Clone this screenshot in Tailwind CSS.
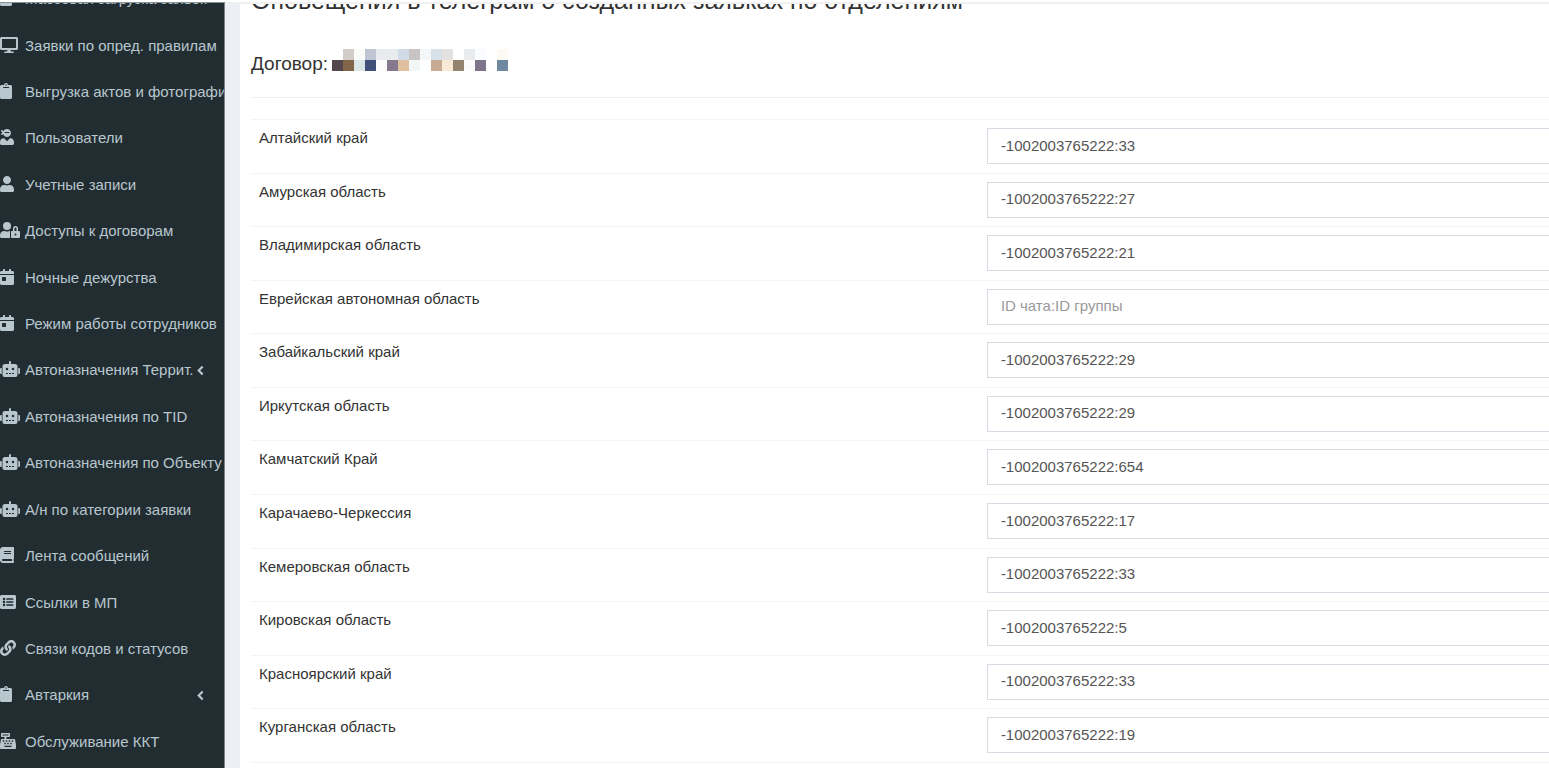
<!DOCTYPE html>
<html lang="ru">
<head>
  <meta charset="UTF-8" />
  <title>Оповещения в телеграм</title>
  <script src="https://cdn.jsdelivr.net/npm/@tailwindcss/browser@4"></script>
</head>
<body class="h-screen overflow-hidden bg-white pt-[2px] font-['Liberation_Sans',Arial,sans-serif] text-[15px] leading-5 text-[#333]">
  <!-- icons -->
  <svg class="hidden">
    <symbol id="i-desktop" viewBox="0 0 576 512"><path d="M528 0H48C21.500 0 0 21.500 0 48v320c0 26.500 21.500 48 48 48h192l-16 48h-72c-13.300 0-24 10.700-24 24s10.700 24 24 24h272c13.300 0 24-10.700 24-24s-10.700-24-24-24h-72l-16-48h192c26.500 0 48-21.500 48-48V48c0-26.500-21.500-48-48-48zm-16 352H64V64h448v288z"/></symbol>
    <symbol id="i-clipboard" viewBox="0 0 384 512"><path d="M384 112v352c0 26.510-21.490 48-48 48H48c-26.510 0-48-21.490-48-48V112c0-26.510 21.490-48 48-48h80c0-35.290 28.710-64 64-64s64 28.710 64 64h80c26.510 0 48 21.490 48 48zM192 40c-13.255 0-24 10.745-24 24s10.745 24 24 24 24-10.745 24-24-10.745-24-24-24m96 114v-20a6 6 0 0 0-6-6H102a6 6 0 0 0-6 6v20a6 6 0 0 0 6 6h180a6 6 0 0 0 6-6z"/></symbol>
    <symbol id="i-ninja" viewBox="0 0 448 512"><path d="M325.400 289.200L224 390.600 122.600 289.200C54 295.300 0 352.200 0 422.400V464c0 26.500 21.500 48 48 48h352c26.500 0 48-21.500 48-48v-41.600c0-70.200-54-127.100-122.600-133.200zM32 192c27.300 0 51.800-11.500 69.200-29.700 15.100 53.900 64 93.700 122.800 93.700 70.700 0 128-57.300 128-128S294.700 0 224 0c-50.400 0-93.600 29.400-114.500 71.800C92.100 47.800 64 32 32 32c0 33.400 17.100 62.800 43.100 80-26 17.200-43.100 46.600-43.100 80zm144-96h96c17.700 0 32 14.300 32 32H144c0-17.700 14.300-32 32-32z"/></symbol>
    <symbol id="i-user" viewBox="0 0 448 512"><path d="M224 256c70.700 0 128-57.300 128-128S294.700 0 224 0 96 57.300 96 128s57.300 128 128 128zm89.600 32h-16.700c-22.200 10.200-46.900 16-72.900 16s-50.600-5.800-72.900-16h-16.700C60.200 288 0 348.200 0 422.400V464c0 26.500 21.500 48 48 48h352c26.500 0 48-21.500 48-48v-41.600c0-74.200-60.200-134.400-134.400-134.400z"/></symbol>
    <symbol id="i-lock" viewBox="0 0 640 512"><path d="M224 256A128 128 0 1 0 96 128a128 128 0 0 0 128 128zm96 64a63.080 63.080 0 0 1 8.100-30.500c-4.800-.5-9.500-1.500-14.500-1.500h-16.700a174.080 174.080 0 0 1-145.800 0h-16.700A134.430 134.430 0 0 0 0 422.400V464a48 48 0 0 0 48 48h280.900a63.540 63.540 0 0 1-8.900-32zm288-32h-32v-80a80 80 0 0 0-160 0v80h-32a32 32 0 0 0-32 32v160a32 32 0 0 0 32 32h224a32 32 0 0 0 32-32V320a32 32 0 0 0-32-32zM496 432a32 32 0 1 1 32-32 32 32 0 0 1-32 32zm32-144h-64v-80a32 32 0 0 1 64 0z"/></symbol>
    <symbol id="i-calendar" viewBox="0 0 448 512"><path d="M0 464c0 26.500 21.500 48 48 48h352c26.500 0 48-21.500 48-48V192H0v272zm64-192c0-8.800 7.200-16 16-16h96c8.800 0 16 7.200 16 16v96c0 8.800-7.200 16-16 16H80c-8.800 0-16-7.200-16-16v-96zM400 64h-48V16c0-8.800-7.200-16-16-16h-32c-8.800 0-16 7.200-16 16v48H160V16c0-8.800-7.200-16-16-16h-32c-8.800 0-16 7.200-16 16v48H48C21.500 64 0 85.500 0 112v48h448v-48c0-26.500-21.500-48-48-48z"/></symbol>
    <symbol id="i-robot" viewBox="0 0 640 512"><path d="M0 256a32 32 0 0 1 32-32H56V416H32A32 32 0 0 1 0 384ZM560 176V448a64 64 0 0 1-64 64H144a64 64 0 0 1-64-64V176a80 80 0 0 1 80-80H288V32a32 32 0 0 1 64 0V96H480A80 80 0 0 1 560 176ZM264 256a40 40 0 1 0-40 40A40 40 0 0 0 264 256Zm-8 128H192v32h64Zm96 0H288v32h64ZM456 256a40 40 0 1 0-40 40A40 40 0 0 0 456 256Zm-8 128H384v32h64ZM640 256V384a32 32 0 0 1-32 32H584V224h24A32 32 0 0 1 640 256Z"/></symbol>
    <symbol id="i-book" viewBox="0 0 448 512"><path d="M448 360V24c0-13.300-10.700-24-24-24H96C43 0 0 43 0 96v320c0 53 43 96 96 96h328c13.300 0 24-10.700 24-24v-16c0-7.500-3.500-14.300-8.900-18.700-4.200-15.400-4.200-59.300 0-74.700 5.400-4.300 8.900-11.100 8.900-18.600zM128 134c0-3.300 2.700-6 6-6h212c3.300 0 6 2.700 6 6v20c0 3.300-2.700 6-6 6H134c-3.300 0-6-2.700-6-6v-20zm0 64c0-3.300 2.700-6 6-6h212c3.300 0 6 2.700 6 6v20c0 3.300-2.700 6-6 6H134c-3.300 0-6-2.700-6-6v-20zm253.400 250H96c-17.700 0-32-14.300-32-32 0-17.600 14.400-32 32-32h285.400c-1.900 17.100-1.900 46.900 0 64z"/></symbol>
    <symbol id="i-list" viewBox="0 0 512 512"><path fill-rule="evenodd" d="M464 480H48c-26.500 0-48-21.500-48-48V80c0-26.500 21.500-48 48-48h416c26.500 0 48 21.500 48 48v352c0 26.500-21.500 48-48 48zM88 160a40 40 0 1 0 80 0a40 40 0 1 0-80 0zM88 256a40 40 0 1 0 80 0a40 40 0 1 0-80 0zM88 352a40 40 0 1 0 80 0a40 40 0 1 0-80 0zM200 136h224v48H200zM200 232h224v48H200zM200 328h224v48H200z"/></symbol>
    <symbol id="i-link" viewBox="0 0 512 512"><path d="M326.612 185.391c59.747 59.809 58.927 155.698.36 214.590-.11.120-.24.250-.36.370l-67.200 67.200c-59.270 59.270-155.699 59.262-214.960 0-59.270-59.260-59.270-155.700 0-214.960l37.106-37.106c9.840-9.840 26.786-3.300 27.294 10.606.648 17.722 3.826 35.527 9.690 52.721 1.986 5.822.567 12.262-3.783 16.612l-13.087 13.087c-28.026 28.026-28.905 73.660-1.155 101.960 28.024 28.579 74.086 28.749 102.325.510l67.200-67.190c28.191-28.191 28.073-73.757 0-101.830-3.701-3.694-7.429-6.564-10.341-8.569a16.037 16.037 0 0 1-6.947-12.606c-.396-10.567 3.348-21.456 11.698-29.806l21.054-21.055c5.521-5.521 14.182-6.199 20.584-1.731a152.482 152.482 0 0 1 20.522 17.197zM467.547 44.449c-59.261-59.262-155.690-59.270-214.960 0l-67.200 67.200c-.12.120-.25.250-.36.370-58.566 58.892-59.387 154.781.360 214.590a152.454 152.454 0 0 0 20.521 17.196c6.402 4.468 15.064 3.789 20.584-1.731l21.054-21.055c8.350-8.350 12.094-19.239 11.698-29.806a16.037 16.037 0 0 0-6.947-12.606c-2.912-2.005-6.640-4.875-10.341-8.569-28.073-28.073-28.191-73.639 0-101.830l67.200-67.190c28.239-28.239 74.300-28.069 102.325.510 27.750 28.300 26.872 73.934-1.155 101.960l-13.087 13.087c-4.350 4.350-5.769 10.790-3.783 16.612 5.864 17.194 9.042 34.999 9.690 52.721.509 13.906 17.454 20.446 27.294 10.606l37.106-37.106c59.271-59.259 59.271-155.699.001-214.959z"/></symbol>
    <symbol id="i-register" viewBox="0 0 512 512"><path fill-rule="evenodd" d="M511 379l-27-160c-2-15-16-27-31-27H208v-64h96c9 0 16-7 16-16V16c0-9-7-16-16-16H48c-9 0-16 7-16 16v96c0 9 7 16 16 16h96v64H59c-15 0-29 12-31 27L1 379c-1 3-1 7-1 10v91c0 18 14 32 32 32h448c18 0 32-14 32-32v-91c0-3 0-7-1-10zM80 48h192v32H80zM88 232h48v48H88zM184 232h48v48h-48zM280 232h48v48h-48zM376 232h48v48h-48zM136 312h48v48h-48zM232 312h48v48h-48zM328 312h48v48h-48zM144 408h224v40H144z"/></symbol>
    <symbol id="i-angle" viewBox="0 0 8 12"><path d="M6.500 1.500L2 6l4.500 4.500" fill="none" stroke="currentColor" stroke-width="2.500"/></symbol>
  </svg>

  <div class="flex h-full">
    <aside class="w-[225px] shrink-0 overflow-hidden border-t border-r border-t-[#8a9194] border-r-[#7d8589] bg-[#222d32] text-[#b8c7ce]">
      <ul id="menu" class="-mt-[27px] grid h-[789px] auto-rows-fr"></ul>
    </aside>

    <main class="min-w-0 grow border-l-[15px] border-[#ecf0f5]">
      <div class="overflow-hidden border-t-2 border-[#f1f1f2] pl-[11px]">
        <h1 class="-mt-[18px] text-[25px] leading-7 whitespace-nowrap">Оповещения в телеграм о созданных заявках по отделениям</h1>
        <div class="mt-[38px] flex items-center">
          <h2 class="w-[81px] text-[19px] leading-6">Договор:</h2>
          <svg id="mosaic" class="-mt-2 h-[22px] w-[176px]" viewBox="0 0 16 2" shape-rendering="crispEdges"></svg>
        </div>
        <hr class="mt-[21px] mb-[21px] border-[#eee]" />
        <table class="h-[644px] w-full table-fixed border-collapse">
          <tbody id="regions"></tbody>
        </table>
      </div>
    </main>
  </div>

  <script>
    const menu = [
      ['clipboard', 'Массовая загрузка заявок'],
      ['desktop', 'Заявки по опред. правилам'],
      ['clipboard', 'Выгрузка актов и фотографий'],
      ['ninja', 'Пользователи'],
      ['user', 'Учетные записи'],
      ['lock', 'Доступы к договорам'],
      ['calendar', 'Ночные дежурства'],
      ['calendar', 'Режим работы сотрудников'],
      ['robot', 'Автоназначения Террит.', true],
      ['robot', 'Автоназначения по TID'],
      ['robot', 'Автоназначения по Объекту'],
      ['robot', 'А/н по категории заявки'],
      ['book', 'Лента сообщений'],
      ['list', 'Ссылки в МП'],
      ['link', 'Связи кодов и статусов'],
      ['clipboard', 'Автаркия', true],
      ['register', 'Обслуживание ККТ']
    ];
    const widths = { desktop: 'w-[18px]', clipboard: 'w-3', ninja: 'w-[14px]', user: 'w-[14px]', lock: 'w-5', calendar: 'w-[14px]', robot: 'w-5', book: 'w-[14px]', list: 'w-4', link: 'w-4', register: 'w-4' };

    document.getElementById('menu').innerHTML = menu.map(([icon, text, sub]) => `
      <li><a href="#" class="flex h-full items-center whitespace-nowrap hover:text-white">
        <span class="w-[25px] shrink-0 pb-[2px]"><svg class="h-4 ${widths[icon]} fill-current"><use href="#i-${icon}"/></svg></span>
        <span class="w-[172px]">${text}</span>
        ${sub ? '<svg class="h-[11px] w-[7px]"><use href="#i-angle"/></svg>' : ''}
      </a></li>`).join('');

    const regions = [
      ['Алтайский край', '-1002003765222:33'],
      ['Амурская область', '-1002003765222:27'],
      ['Владимирская область', '-1002003765222:21'],
      ['Еврейская автономная область', ''],
      ['Забайкальский край', '-1002003765222:29'],
      ['Иркутская область', '-1002003765222:29'],
      ['Камчатский Край', '-1002003765222:654'],
      ['Карачаево-Черкессия', '-1002003765222:17'],
      ['Кемеровская область', '-1002003765222:33'],
      ['Кировская область', '-1002003765222:5'],
      ['Красноярский край', '-1002003765222:33'],
      ['Курганская область', '-1002003765222:19']
    ];

    document.getElementById('regions').innerHTML = regions.map(([name, chat], i) => `
      <tr class="border-y border-[#f4f4f4]">
        <td class="w-[56%] px-2 pt-2 align-top"><label for="r${i}">${name}</label></td>
        <td class="pt-2 pl-[9px] align-top">
          <input id="r${i}" type="text" value="${chat}" placeholder="ID чата:ID группы" class="block h-9 w-full border border-r-0 border-[#d8dbe3] px-[13px] pb-[2px] text-[#555] placeholder:text-[#999]" />
        </td>
      </tr>`).join('');

    // hidden contract number
    const blocks = [
      ['#fff', '#d3cdca', '#fafcf9', '#c0c5d3', '#e8eaed', '#e8ecef', '#d0dbe7', '#c9c4c4', '#f4f6f7', '#d8e1ea', '#e3e2e0', '#fff', '#e9ebed', '#fafcff', '#fff', '#fdfaf4'],
      ['#53464d', '#806548', '#dae7e6', '#41527a', '#fcfcfd', '#86788f', '#dfc1a0', '#f3f6f7', '#fff', '#c7ab94', '#f8ead6', '#94836e', '#fbfbfc', '#7e758a', '#fff', '#6f89a1']
    ];
    document.getElementById('mosaic').innerHTML = blocks.map((row, y) =>
      row.map((c, x) => `<rect x="${x}" y="${y}" width="1" height="1" fill="${c}"/>`).join('')).join('');
  </script>
</body>
</html>
